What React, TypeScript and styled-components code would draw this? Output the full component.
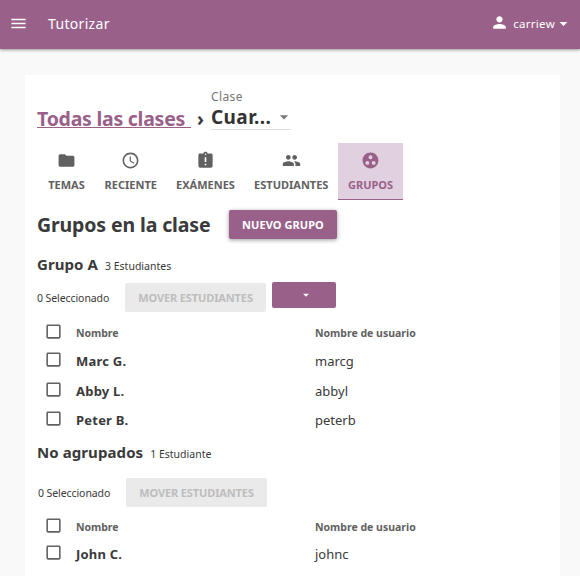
import React from "react";
import styled, { createGlobalStyle } from "styled-components";
import {
  MdMenu, MdPerson, MdArrowDropDown, MdFolder, MdAccessTime,
  MdAssignmentLate, MdPeople, MdGroupWork, MdCheckBoxOutlineBlank,
} from "react-icons/md";

const purple = "#996189";
const ink = "#3a3a3a";
const grey = "#616161";

const Global = createGlobalStyle`
  * { box-sizing: border-box; }
  body { margin: 0; background: #f9f9f9; color: ${ink}; font-family: "Noto Sans", sans-serif; overflow: hidden; }
  button { font-family: inherit; border: 0; padding: 0; margin: 0; }
  svg { display: block; flex: none; }
`;

const Page = styled.div`
  height: 576px;
  overflow: hidden;
  display: flex;
  flex-direction: column;
`;

const AppBar = styled.header`
  height: 49px;
  flex: none;
  display: flex;
  align-items: center;
  padding: 0 7px 2px 9px;
  background: ${purple};
  color: #fff;
  box-shadow: 0 1px 3px rgba(0, 0, 0, 0.4);
`;

const AppTitle = styled.div`
  flex: 1;
  margin-left: 20px;
  font-size: 14px;
  line-height: 20px;
  letter-spacing: 0.32px;
  padding-top: 1px;
`;

const UserMenu = styled.div`
  display: flex;
  align-items: center;
  font-size: 11.5px;
  letter-spacing: 0.3px;
  svg:first-child { margin: 0 4px 2px 0; }
  svg:last-child { margin-left: -1px; }
`;

const Card = styled.main`
  flex: 1;
  margin: 26px 20px 0 25px;
  padding: 13px 12px 0;
  background: #fff;
`;

const Breadcrumbs = styled.nav`
  display: flex;
  height: 55px;
  font-size: 20px;
  font-weight: 700;
`;

const CrumbLink = styled.a`
  margin-top: 20px;
  width: 154px;
  height: 20px;
  line-height: 21px;
  letter-spacing: -0.25px;
  font-size: 19.5px;
  color: ${purple};
  border-bottom: 1px solid ${purple};
  white-space: nowrap;
`;

const Chevron = styled.span`
  width: 20px;
  padding: 19px 0 0 6px;
  line-height: 24px;
  font-size: 19px;
`;

const ClassSelect = styled.div`
  width: 80px;
  height: 42px;
  border-bottom: 1px solid #ddd;
`;

const SelectLabel = styled.div`
  padding-top: 1px;
  font-size: 12px;
  line-height: 16px;
  font-weight: 400;
  letter-spacing: 0.4px;
  color: #777;
`;

const SelectValue = styled.div`
  display: flex;
  align-items: center;
  justify-content: space-between;
  line-height: 25px;
  font-size: 19px;
  letter-spacing: 0.4px;
  color: #333;
  svg { color: #777; margin: 0 -3px 2px 0; }
`;

const Tabs = styled.div`
  display: grid;
  grid-template-columns: 57px 71.5px 78px 93.5px 65px;
  height: 57px;
  margin-left: 1px;
`;

const Tab = styled.div<{ $active?: boolean }>`
  display: flex;
  flex-direction: column;
  align-items: center;
  padding-top: 8px;
  font-size: 11px;
  font-weight: 700;
  line-height: 18px;
  white-space: nowrap;
  color: ${(p) => (p.$active ? purple : grey)};
  background: ${(p) => (p.$active ? "#e1d0df" : "transparent")};
  border-bottom: 1px solid ${(p) => (p.$active ? purple : "transparent")};
  svg { margin-bottom: 6px; }
`;

const HeadingRow = styled.div`
  display: flex;
  height: 29px;
  margin-top: 10px;
`;

const Heading = styled.h1`
  margin: 0;
  width: 192px;
  font-size: 19.5px;
  line-height: 30px;
  letter-spacing: -0.13px;
  white-space: nowrap;
`;

const Button = styled.button<{ $width: number; $disabled?: boolean }>`
  width: ${(p) => p.$width}px;
  height: 29px;
  border-radius: 2px;
  font-size: 11px;
  font-weight: 700;
  letter-spacing: ${(p) => (p.$disabled ? -0.12 : 0.07)}px;
  color: ${(p) => (p.$disabled ? "#bdbdbd" : "#fff")};
  background: ${(p) => (p.$disabled ? "#eaeaea" : purple)};
  box-shadow: ${(p) => (p.$disabled ? "none" : "0 1px 4px rgba(0, 0, 0, 0.4)")};
`;

const GroupTitle = styled.div<{ $top: number }>`
  display: flex;
  align-items: baseline;
  gap: 7px;
  height: 22px;
  line-height: 22px;
  margin-top: ${(p) => p.$top}px;
`;

const GroupName = styled.h2`
  margin: 0;
  font-size: 15px;
  letter-spacing: 0.08px;
`;

const Count = styled.span`
  font-size: 10.5px;
`;

const Actions = styled.div<{ $top: number; $indent?: number }>`
  display: flex;
  height: 29px;
  margin-top: ${(p) => p.$top}px;
  padding-left: ${(p) => p.$indent ?? 0}px;
`;

const Selected = styled.span`
  width: 88px;
  font-size: 10.5px;
  line-height: 30px;
  letter-spacing: -0.08px;
  white-space: nowrap;
`;

const Dropdown = styled.button`
  display: flex;
  align-items: center;
  justify-content: center;
  width: 64px;
  height: 26px;
  margin: -1px 0 0 6px;
  padding-left: 4px;
  border-radius: 2px;
  color: #fff;
  background: ${purple};
`;

const Row = styled.div<{ $height: number; $head?: boolean }>`
  display: grid;
  grid-template-columns: 32px 239px 1fr;
  align-items: center;
  height: ${(p) => p.$height}px;
  padding-left: 7px;
  font-size: ${(p) => (p.$head ? 10.5 : 13)}px;
  line-height: 20px;
  font-weight: ${(p) => (p.$head ? 700 : 400)};
  color: ${(p) => (p.$head ? grey : ink)};
  svg { color: ${grey}; margin-bottom: 4px; }
  span { margin-bottom: ${(p) => (p.$head ? 0 : 1)}px; }
`;

const Name = styled.span<{ $track: number }>`
  font-weight: 700;
  letter-spacing: ${(p) => p.$track}px;
`;

const Table = styled.div<{ $top: number }>`
  margin-top: ${(p) => p.$top}px;
`;

type Student = { name: string; user: string; height: number };

function StudentTable({ top, headHeight, students }: { top: number; headHeight: number; students: Student[] }) {
  return (
    <Table $top={top}>
      <Row $height={headHeight} $head>
        <MdCheckBoxOutlineBlank size={19} />
        <Name $track={-0.03}>Nombre</Name>
        <span>Nombre de usuario</span>
      </Row>
      {students.map((s) => (
        <Row key={s.user} $height={s.height}>
          <MdCheckBoxOutlineBlank size={19} />
          <Name $track={0.22}>{s.name}</Name>
          <span>{s.user}</span>
        </Row>
      ))}
    </Table>
  );
}

const tabs = [
  { label: "TEMAS", Icon: MdFolder },
  { label: "RECIENTE", Icon: MdAccessTime },
  { label: "EXÁMENES", Icon: MdAssignmentLate },
  { label: "ESTUDIANTES", Icon: MdPeople },
  { label: "GRUPOS", Icon: MdGroupWork, active: true },
];

const groupA: Student[] = [
  { name: "Marc G.", user: "marcg", height: 29 },
  { name: "Abby L.", user: "abbyl", height: 30 },
  { name: "Peter B.", user: "peterb", height: 29 },
];

const ungrouped: Student[] = [{ name: "John C.", user: "johnc", height: 27 }];

export default function App() {
  return (
    <Page>
      <Global />
      <AppBar>
        <MdMenu size={19} />
        <AppTitle>Tutorizar</AppTitle>
        <UserMenu>
          <MdPerson size={19} />
          carriew
          <MdArrowDropDown size={19} />
        </UserMenu>
      </AppBar>
      <Card>
        <Breadcrumbs>
          <CrumbLink>Todas las clases</CrumbLink>
          <Chevron>›</Chevron>
          <ClassSelect>
            <SelectLabel>Clase</SelectLabel>
            <SelectValue>
              Cuar...
              <MdArrowDropDown size={20} />
            </SelectValue>
          </ClassSelect>
        </Breadcrumbs>
        <Tabs>
          {tabs.map(({ label, Icon, active }) => (
            <Tab key={label} $active={active}>
              <Icon size={19} />
              {label}
            </Tab>
          ))}
        </Tabs>
        <HeadingRow>
          <Heading>Grupos en la clase</Heading>
          <Button $width={108}>NUEVO GRUPO</Button>
        </HeadingRow>
        <GroupTitle $top={14}>
          <GroupName>Grupo A</GroupName>
          <Count>3 Estudiantes</Count>
        </GroupTitle>
        <Actions $top={8}>
          <Selected>0 Seleccionado</Selected>
          <Button $width={141} $disabled>MOVER ESTUDIANTES</Button>
          <Dropdown><MdArrowDropDown size={14} /></Dropdown>
        </Actions>
        <StudentTable top={7} headHeight={28} students={groupA} />
        <GroupTitle $top={6}>
          <GroupName>No agrupados</GroupName>
          <Count>1 Estudiante</Count>
        </GroupTitle>
        <Actions $top={15} $indent={1}>
          <Selected>0 Seleccionado</Selected>
          <Button $width={141} $disabled>MOVER ESTUDIANTES</Button>
        </Actions>
        <StudentTable top={6} headHeight={28} students={ungrouped} />
      </Card>
    </Page>
  );
}
